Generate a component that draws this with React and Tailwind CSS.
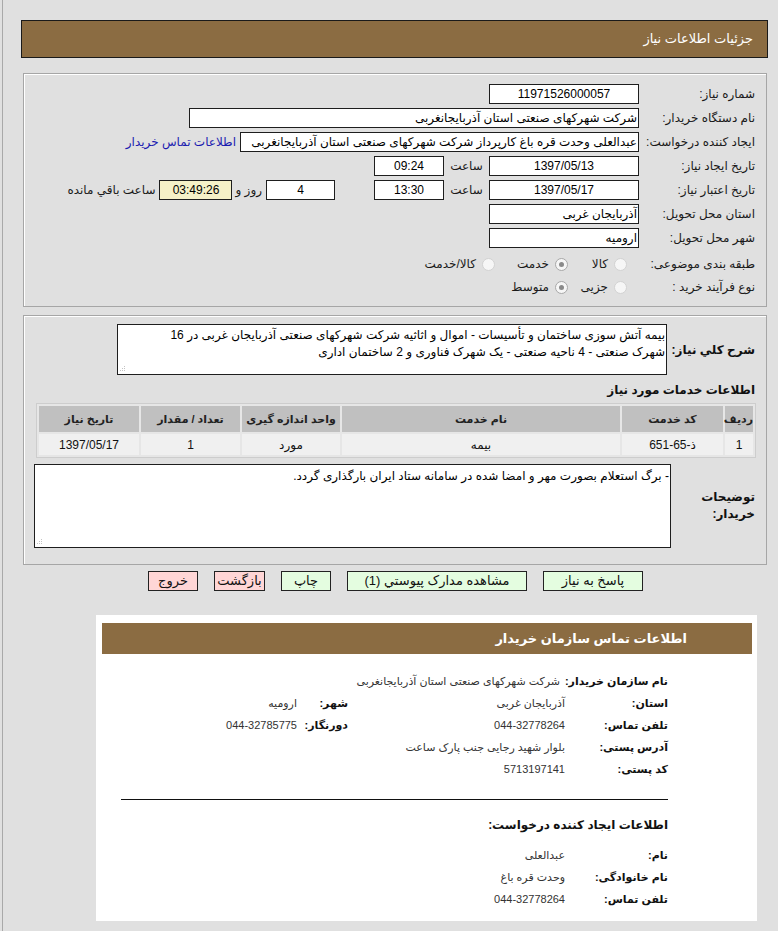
import React from 'react'

const FONT = "font-['Liberation_Sans','DejaVu_Sans',sans-serif]"

function Grip() {
  return (
    <svg className="absolute bottom-[2px] left-[2px]" width="6" height="6" viewBox="0 0 6 6">
      <rect x="4" y="0" width="1" height="1" fill="#c4c4c4" />
      <rect x="2" y="2" width="1" height="1" fill="#c4c4c4" />
      <rect x="4" y="2" width="1" height="1" fill="#c4c4c4" />
      <rect x="0" y="4" width="1" height="1" fill="#c4c4c4" />
      <rect x="2" y="4" width="1" height="1" fill="#c4c4c4" />
      <rect x="4" y="4" width="1" height="1" fill="#c4c4c4" />
    </svg>
  )
}

function Field({ className = '', children }) {
  return (
    <div className={`flex h-[20px] shrink-0 items-center border border-[#1e1e1e] text-[12px] leading-none text-black ${className}`}>
      {children}
    </div>
  )
}

function Row({ label, children, className = '' }) {
  return (
    <div className={`flex h-[20px] items-center ${className}`}>
      <div className="w-[116px] shrink-0 whitespace-nowrap text-[12px] text-[#1a1a1a]">{label}</div>
      {children}
    </div>
  )
}

function Radio({ checked }) {
  return (
    <span
      className={`inline-flex h-[13px] w-[13px] shrink-0 items-center justify-center rounded-full border bg-[#f6f6f6] ${
        checked ? 'border-[#a8a8a8]' : 'border-[#d2d2d2]'
      }`}
    >
      {checked && <span className="h-[5px] w-[5px] rounded-full bg-[#8a8a8a]" />}
    </span>
  )
}

function Option({ checked, label, className = '' }) {
  return (
    <div className={`flex items-center gap-[6px] ${className}`}>
      <Radio checked={checked} />
      <span className="text-[12px] text-[#1a1a1a]">{label}</span>
    </div>
  )
}

function Btn({ children, className = '' }) {
  return (
    <div className={`flex h-[20px] items-center justify-center border border-[#222] text-[13px] text-[#111] ${className}`}>
      {children}
    </div>
  )
}

function InfoRow({ label, value, label2, value2, wide }) {
  return (
    <div className="flex h-[22px] items-center">
      <div className={`shrink-0 whitespace-nowrap text-[11px] font-bold text-[#111] ${wide ? 'w-[108px]' : 'w-[103px]'}`}>{label}</div>
      <div className={`shrink-0 text-[11px] text-[#333] ${wide ? 'w-[212px]' : 'w-[217px]'}`}>{value}</div>
      {label2 && <div className="w-[51px] shrink-0 whitespace-nowrap text-[11px] font-bold text-[#111]">{label2}</div>}
      {value2 && <div className="text-[11px] text-[#333]">{value2}</div>}
    </div>
  )
}

const columns = [
  { title: 'ردیف', w: 'w-[28px]' },
  { title: 'کد خدمت', w: 'w-[101px]' },
  { title: 'نام خدمت', w: '' },
  { title: 'واحد اندازه گیری', w: 'w-[98px]' },
  { title: 'تعداد / مقدار', w: 'w-[99px]' },
  { title: 'تاریخ نیاز', w: 'w-[100px]' },
]

const rows = [['1', 'ذ-65-651', 'بیمه', 'مورد', '1', '1397/05/17']]

export default function App() {
  return (
    <div dir="rtl" className={`min-h-[931px] bg-[#e0e0e0] ${FONT}`}>
      <div className="ml-[2px] min-h-[931px] border-l border-[#a9a9a9] pb-[13px] pl-[18px] pr-[10px] pt-[20px]">
        {/* page title */}
        <div className="flex h-[38px] items-center border border-[#1a1a1a] bg-[#8b6c42] pr-[14px] text-[13px] text-white">
          جزئیات اطلاعات نیاز
        </div>

        {/* main form */}
        <div className="ml-[2px] mr-[1px] mt-[15px] border border-[#a6a6a6] pb-[9px] pr-[11px] pt-[10px] shadow-[inset_1px_1px_0_#fff]">
          <Row label="شماره نیاز:">
            <Field className="w-[150px] justify-center bg-white">11971526000057</Field>
          </Row>
          <Row label="نام دستگاه خریدار:" className="mt-[4px]">
            <Field className="w-[450px] bg-white pr-[1px]">شرکت شهرکهای صنعتی استان آذربایجانغربی</Field>
          </Row>
          <Row label="ایجاد کننده درخواست:" className="mt-[4px]">
            <Field className="w-[399px] bg-white pr-[1px]">
              عبدالعلی وحدت قره باغ کارپرداز شرکت شهرکهای صنعتی استان آذربایجانغربی
            </Field>
            <span className="mr-[4px] text-[12px] text-[#1b1bb0]">اطلاعات تماس خریدار</span>
          </Row>
          <Row label="تاریخ ایجاد نیاز:" className="mt-[4px]">
            <Field className="w-[150px] justify-center bg-white">1397/05/13</Field>
            <span className="w-[45px] text-center text-[12px] text-[#1a1a1a]">ساعت</span>
            <Field className="w-[70px] justify-center bg-white">09:24</Field>
          </Row>
          <Row label="تاریخ اعتبار نیاز:" className="mt-[4px]">
            <Field className="w-[150px] justify-center bg-white">1397/05/17</Field>
            <span className="w-[45px] text-center text-[12px] text-[#1a1a1a]">ساعت</span>
            <Field className="w-[70px] justify-center bg-white">13:30</Field>
            <Field className="mr-[39px] w-[69px] justify-center bg-white">4</Field>
            <span className="mr-[4px] text-[12px] text-[#1a1a1a]">روز و</span>
            <Field className="mr-[3px] w-[73px] justify-center bg-[#f5f1c8]">03:49:26</Field>
            <span className="mr-[4px] text-[12px] text-[#1a1a1a]">ساعت باقي مانده</span>
          </Row>
          <Row label="استان محل تحویل:" className="mt-[4px]">
            <Field className="w-[150px] bg-white pr-[1px]">آذربایجان غربی</Field>
          </Row>
          <Row label="شهر محل تحویل:" className="mt-[4px]">
            <Field className="w-[150px] bg-white pr-[1px]">ارومیه</Field>
          </Row>
          <Row label="طبقه بندی موضوعی:" className="mt-[6px]">
            <div className="flex items-center pr-[12px]">
              <Option label="کالا" className="w-[59px]" />
              <Option label="خدمت" checked className="w-[73px]" />
              <Option label="کالا/خدمت" />
            </div>
          </Row>
          <Row label="نوع فرآیند خرید :" className="mt-[3px]">
            <div className="flex items-center pr-[12px]">
              <Option label="جزیی" className="w-[59px]" />
              <Option label="متوسط" checked />
            </div>
          </Row>
        </div>

        {/* description + items */}
        <div className="ml-[2px] mr-[1px] mt-[8px] border border-[#a6a6a6] pb-[16px] pt-[8px] shadow-[inset_1px_1px_0_#fff]">
          <div className="flex items-center pr-[11px]">
            <div className="w-[86px] shrink-0 whitespace-nowrap text-[12px] font-bold text-[#111]">شرح کلي نیاز:</div>
            <div className="relative mr-[2px] h-[51px] w-[550px] border border-[#1e1e1e] bg-white pr-[1px] pt-[2px] text-[12px] leading-[17px] text-black">
              بیمه آتش سوزی ساختمان و تأسیسات - اموال و اثاثیه شرکت شهرکهای صنعتی آذربایجان غربی در 16
              <br />
              شهرک صنعتی - 4 ناحیه صنعتی - یک شهرک فناوری و 2 ساختمان اداری
              <Grip />
            </div>
          </div>

          <div className="mt-[6px] h-[18px] pr-[11px] text-[12px] font-bold leading-[18px] text-[#111]">
            اطلاعات خدمات مورد نیاز
          </div>

          <div className="ml-[12px] mr-[10px] mt-[4px]">
            <table className="w-full table-fixed border-separate border-spacing-[2px] border border-[#cdcdcd] bg-[#e6e6e6]">
              <thead>
                <tr>
                  {columns.map((c) => (
                    <th key={c.title} className={`${c.w} h-[26px] bg-[#c0c0c0] text-center text-[11px] font-bold text-[#222]`}>
                      {c.title}
                    </th>
                  ))}
                </tr>
              </thead>
              <tbody>
                {rows.map((r, i) => (
                  <tr key={i}>
                    {r.map((v, j) => (
                      <td key={j} className="h-[21px] bg-[#f0f0f0] text-center text-[12px] text-[#111]">
                        {v}
                      </td>
                    ))}
                  </tr>
                ))}
              </tbody>
            </table>
          </div>

          <div className="mt-[6px] flex items-center pr-[11px]">
            <div className="w-[84px] shrink-0 text-[12px] font-bold leading-[17px] text-[#111]">
              توضیحات
              <br />
              خریدار:
            </div>
            <div className="relative h-[84px] w-[637px] border border-[#1e1e1e] bg-white pr-[1px] pt-[2px] text-[12px] text-black">
              - برگ استعلام بصورت مهر و امضا شده در سامانه ستاد ایران بارگذاری گردد.
              <Grip />
            </div>
          </div>
        </div>

        {/* actions */}
        <div className="mt-[6px] flex justify-center gap-[16px] pl-[2px]">
          <Btn className="w-[100px] bg-[#e4fde0]">پاسخ به نیاز</Btn>
          <Btn className="w-[180px] bg-[#e4fde0]">مشاهده مدارک پیوستي (1)</Btn>
          <Btn className="w-[50px] bg-[#e4fde0]">چاپ</Btn>
          <Btn className="w-[51px] bg-[#ffd6d6]">بازگشت</Btn>
          <Btn className="w-[50px] bg-[#ffd6d6]">خروج</Btn>
        </div>

        {/* buyer contact card */}
        <div className="mr-[11px] mt-[24px] w-[661px] bg-white pb-[11px] pl-[6px] pr-[5px] pt-[8px]">
          <div className="flex h-[31px] items-center bg-[#8b6c42] pr-[65px] text-[13px] font-bold text-white">
            اطلاعات تماس سازمان خریدار
          </div>
          <div className="pr-[84px]">
            <div className="mt-[16px]">
              <InfoRow wide label="نام سازمان خریدار:" value="شرکت شهرکهای صنعتی استان آذربایجانغربی" />
              <InfoRow label="استان:" value="آذربایجان غربی" label2="شهر:" value2="ارومیه" />
              <InfoRow label="تلفن تماس:" value="044-32778264" label2="دورنگار:" value2="044-32785775" />
              <InfoRow label="آدرس پستی:" value="بلوار شهید رجایی جنب پارک ساعت" />
              <InfoRow label="کد پستی:" value="5713197141" />
            </div>
            <div className="mt-[19px] w-[547px] border-t border-[#111]" />
            <div className="mt-[17px] h-[16px] text-[12px] font-bold leading-[16px] text-[#111]">
              اطلاعات ایجاد کننده درخواست:
            </div>
            <div className="mt-[11px]">
              <InfoRow label="نام:" value="عبدالعلی" />
              <InfoRow label="نام خانوادگی:" value="وحدت قره باغ" />
              <InfoRow label="تلفن تماس:" value="044-32778264" />
            </div>
          </div>
        </div>
      </div>
    </div>
  )
}
